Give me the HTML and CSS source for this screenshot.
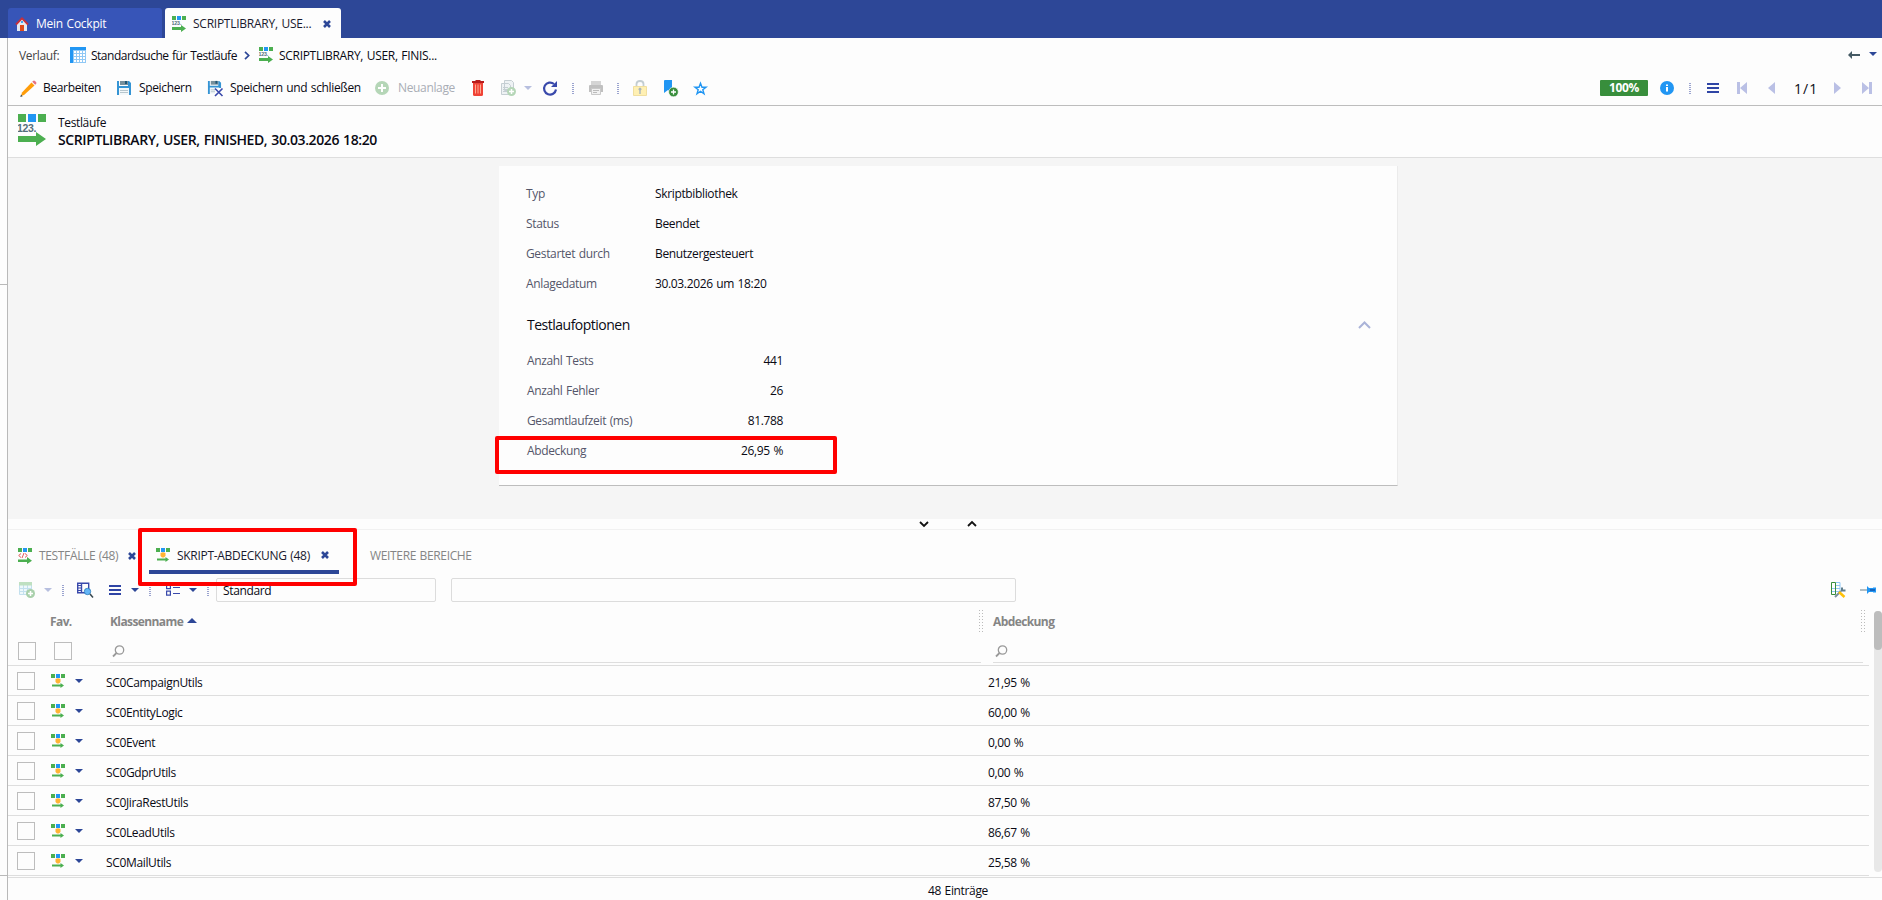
FILE: index.html
```html
<!DOCTYPE html>
<html lang="de">
<head>
<meta charset="UTF-8">
<meta name="viewport" content="width=device-width, initial-scale=1.0">
<title>Testläufe</title>
<link rel="stylesheet" href="styles.css">
</head>
<body>

<!-- shared icons -->
<svg class="symbols">
    <symbol id="i-run" viewBox="0 0 28 32">
        <path fill="#4caf50" d="M0 0h8v8H0zM20 0h8v8h-8z"/><path fill="#2196f3" d="M10 0h8v8h-8z"/>
        <text x="-1" y="18" font-family="Liberation Sans" font-weight="bold" font-size="10.5" fill="#546e7a">123.</text>
        <path fill="#4caf50" d="M0 22h18v-4l10 7-10 7v-4H0z"/>
    </symbol>
    <symbol id="i-case" viewBox="0 0 14 16">
        <path fill="#4caf50" d="M0 0h4v4H0zM10 0h4v4h-4zM0 11.500h9V9l5 3.700-5 3.300v-2H0z"/><path fill="#2196f3" d="M5 0h4v4H5z"/>
        <path fill="none" stroke="#e05a5a" d="M3 5.500L.7 7.500 3 9.500M6 5L4 10M7 5.500l2.300 2L7 9.500"/>
    </symbol>
    <symbol id="i-cover" viewBox="0 0 14 14">
        <path fill="#4caf50" d="M0 0h4v4H0zM10 0h4v4h-4zM1 10.500h8.500V9l3.500 2.500L9.500 14v-1.500H1z"/><path fill="#2196f3" d="M5 0h4v4H5z"/>
        <path fill="#ffb433" d="M4.500 5q2.500-1.500 5 0v3L8 9.500H6L4.500 8z"/>
    </symbol>
    <symbol id="i-x" viewBox="0 0 8 8"><path stroke="#2d4797" stroke-width="2.600" d="M1 1l6 6M7 1L1 7"/></symbol>
    <symbol id="i-caret" viewBox="0 0 8 4"><path fill="currentColor" d="M0 0h8L4 4z"/></symbol>
    <symbol id="i-menu" viewBox="0 0 12 10"><path fill="#2f45a5" d="M0 0h12v2H0zM0 4h12v2H0zM0 8h12v2H0z"/></symbol>
    <symbol id="i-mag" viewBox="0 0 13 13"><circle cx="7.500" cy="5" r="4.200" fill="none" stroke="#9a9a9a" stroke-width="1.300"/><path stroke="#9a9a9a" stroke-width="1.800" d="M4.500 8L1 11.500"/></symbol>
    <symbol id="i-save" viewBox="0 0 16 16">
        <path fill="#3594d4" d="M1 1h2v5h9V1h1l2 2v12H1z"/><path fill="#78909c" d="M4 1h8v4H4z"/><path fill="#1c5577" d="M9 1h2v3H9z"/>
        <path fill="#f3f8fa" d="M3 8h10v7H3z"/><path stroke="#b7c6cd" d="M4 10.500h8M4 12.500h8"/>
    </symbol>
</svg>

<header class="tabbar">
    <div class="tab">
        <svg width="14" height="14" viewBox="0 0 14 14"><path fill="#e4e9f2" d="M2 6l5-5 5 5v8H2z"/><path fill="#e04a1b" d="M5 8h4v6H5z"/><path fill="#42a5f5" d="M6 4h2v2H6z"/><path fill="none" stroke="#c62f3c" stroke-width="1.800" d="M1 7.500L7 1.300l6 6.200"/></svg>
        <span>Mein Cockpit</span>
    </div>
    <div class="tab active">
        <svg width="14" height="16"><use href="#i-run"/></svg>
        <span class="tab-text">SCRIPTLIBRARY, USE...</span>
        <svg width="8" height="8"><use href="#i-x"/></svg>
    </div>
</header>

<div class="page">
<aside class="rail"><i class="mark1"></i><i class="mark2"></i></aside>
<main>
    <nav class="history">
        <span class="muted">Verlauf:</span>
        <svg width="16" height="16" viewBox="0 0 16 16"><path fill="#90c8f5" d="M0 0h16v16H0z"/><path fill="#2196f3" d="M0 0h16v3H3v13H0z"/><path fill="#fff" d="M4 4h2v2H4zM7 4h2v2H7zM10 4h2v2h-2zM13 4h2v2h-2zM4 7h2v2H4zM7 7h2v2H7zM10 7h2v2h-2zM13 7h2v2h-2zM4 10h2v2H4zM7 10h2v2H7zM10 10h2v2h-2zM13 10h2v2h-2zM4 13h2v2H4zM7 13h2v2H7zM10 13h2v2h-2zM13 13h2v2h-2z"/></svg>
        <span class="t-std">Standardsuche für Testläufe</span>
        <svg width="6" height="9" viewBox="0 0 6 9"><path fill="none" stroke="#2d4797" stroke-width="1.700" d="M1 .8l3.700 3.700L1 8.200"/></svg>
        <svg width="14" height="16"><use href="#i-run"/></svg>
        <span class="t-lib">SCRIPTLIBRARY, USER, FINIS...</span>
        <svg width="12" height="8" viewBox="0 0 12 8"><path fill="#455a64" d="M0 4l4-4v3h8v2H4v3z"/></svg>
        <svg class="caret up3" width="8" height="4"><use href="#i-caret"/></svg>
    </nav>

    <div class="toolbar">
        <svg width="17" height="17" viewBox="0 0 17 17"><path fill="#ff9d0a" d="M11.500 2.500l3 3L4 15l-3 1 1-3.500z"/><path fill="#e57383" d="M13 1q1-1 2 0l1 1q1 1 0 2l-.8.8-3-3z"/><path fill="#37474f" d="M1 14.500L.3 17l2.400-.8z"/></svg>
        <span>Bearbeiten</span>
        <svg width="16" height="16"><use href="#i-save"/></svg>
        <span>Speichern</span>
        <svg width="16" height="17" viewBox="0 0 16 17"><use href="#i-save" width="15" height="15"/><path fill="#fdfdfd" d="M8 8h8v9H8z"/><path stroke="#3949ab" stroke-width="1.600" d="M8 8.500l7.500 7.500M15.500 8.500L8 16"/></svg>
        <span>Speichern und schließen</span>
        <svg width="14" height="14" viewBox="0 0 14 14"><circle cx="7" cy="7" r="7" fill="#b5d6b7"/><path stroke="#fff" stroke-width="2" d="M7 3v8M3 7h8"/></svg>
        <span class="off">Neuanlage</span>
        <svg width="12" height="16" viewBox="0 0 12 16"><path fill="#b71c1c" d="M0 1h3.500V0h5v1H12v2H0z"/><path fill="#f04336" d="M1 3h10v11.500q0 1.500-1.500 1.500h-7Q1 16 1 14.500z"/><path stroke="#ffab91" d="M3.500 4.500v9M6 4.500v9M8.500 4.500v9"/></svg>
        <svg width="15" height="16" viewBox="0 0 15 16"><path fill="#eef2f4" stroke="#c5ced3" d="M3.500.5h7l2 2v8h-9zM.5 3.500h7l2 2v9h-9z"/><path stroke="#c5ced3" d="M2 7.500h5M2 9.500h5M2 11.500h5"/><circle cx="10.500" cy="11.500" r="4.500" fill="#b5d6b7"/><path stroke="#fff" stroke-width="1.500" d="M10.500 9v5M8 11.500h5"/></svg>
        <svg class="caret off" width="8" height="4"><use href="#i-caret"/></svg>
        <svg width="15" height="15" viewBox="0 0 15 15"><path fill="none" stroke="#3949ab" stroke-width="2.200" d="M11 3A6 6 0 1 0 13 8.500"/><path fill="#3949ab" d="M8 6h6V0z"/></svg>
        <i class="sep"></i>
        <svg width="14" height="14" viewBox="0 0 14 14"><path fill="#d5d5d5" d="M2 0h10v4H2z"/><path fill="#c0c0c0" d="M0 5q0-1 1-1h12q1 0 1 1v6H0z"/><path fill="#f1f1f1" stroke="#c9c9c9" d="M2.500 7.500h9v6h-9z"/><path stroke="#bbb" d="M4 9.500h6M4 11.500h4"/></svg>
        <i class="sep"></i>
        <svg width="14" height="16" viewBox="0 0 14 16"><path fill="none" stroke="#c3cdd1" stroke-width="1.800" d="M3.500 7V4q0-3 3.500-3t3.500 3v3"/><path fill="#fff0b3" stroke="#f0dfa0" d="M.5 6.500h13v9H.5z"/><path fill="#a9b5bb" d="M6.300 10.500a1.500 1.500 0 1 1 1.400 0V14H6.300z"/></svg>
        <svg width="14" height="17" viewBox="0 0 14 17"><path fill="#2196f3" d="M0 1q0-1 1-1h7v13l-4-3-4 3z"/><circle cx="9.500" cy="12" r="4.800" fill="#388e3c" stroke="#fdfdfd" stroke-width=".6"/><path stroke="#fff" stroke-width="1.300" d="M9.500 9.500v5M7 12h5"/></svg>
        <svg width="13" height="13" viewBox="0 0 13 13"><path fill="none" stroke="#2196f3" stroke-width="1.400" d="M6.500 1.200l1.500 4h4L8.800 7.700l1.200 4.100-3.500-2.500L3 11.800l1.200-4.100L1 5.200h4z"/></svg>
        <span class="badge">100%</span>
        <svg width="14" height="14" viewBox="0 0 14 14"><circle cx="7" cy="7" r="7" fill="#2196f3"/><path fill="#fff" d="M6 3.500h2v1.500H6zM6 6h2v4.500H6z"/></svg>
        <i class="sep"></i>
        <svg width="12" height="10"><use href="#i-menu"/></svg>
        <svg width="10" height="12" viewBox="0 0 10 12"><path fill="#bac0e5" d="M0 0h3v12H0zM10 0v12L3 6z"/></svg>
        <svg width="7" height="12" viewBox="0 0 7 12"><path fill="#bac0e5" d="M7 0v12L0 6z"/></svg>
        <span class="pages">1/1</span>
        <svg width="7" height="12" viewBox="0 0 7 12"><path fill="#bac0e5" d="M0 0v12l7-6z"/></svg>
        <svg width="10" height="12" viewBox="0 0 10 12"><path fill="#bac0e5" d="M7 0h3v12H7zM0 0v12l7-6z"/></svg>
    </div>

    <div class="title">
        <svg width="28" height="32"><use href="#i-run"/></svg>
        <div>
            <p>Testläufe</p>
            <h1>SCRIPTLIBRARY, USER, FINISHED, 30.03.2026 18:20</h1>
        </div>
    </div>

    <section class="content">
        <div class="card">
            <dl class="fields">
                <dt>Typ</dt><dd>Skriptbibliothek</dd>
                <dt>Status</dt><dd>Beendet</dd>
                <dt>Gestartet durch</dt><dd>Benutzergesteuert</dd>
                <dt>Anlagedatum</dt><dd>30.03.2026 um 18:20</dd>
            </dl>
            <div class="group">
                <h2>Testlaufoptionen</h2>
                <svg width="13" height="8" viewBox="0 0 13 8"><path fill="none" stroke="#aab3d8" stroke-width="2" d="M1 7l5.500-5.500L12 7"/></svg>
            </div>
            <dl class="fields numbers">
                <dt>Anzahl Tests</dt><dd>441</dd>
                <dt>Anzahl Fehler</dt><dd>26</dd>
                <dt>Gesamtlaufzeit (ms)</dt><dd>81.788</dd>
                <dt>Abdeckung</dt><dd>26,95 %</dd>
            </dl>
            <div class="mark mark-value"></div>
        </div>
    </section>

    <div class="splitter">
        <svg width="10" height="6" viewBox="0 0 10 6"><path fill="none" stroke="#111" stroke-width="1.800" d="M1 1l4 4 4-4"/></svg>
        <svg width="10" height="6" viewBox="0 0 10 6"><path fill="none" stroke="#111" stroke-width="1.800" d="M1 5l4-4 4 4"/></svg>
    </div>

    <div class="subtabs">
        <div class="subtab first">
            <svg width="14" height="16"><use href="#i-case"/></svg>
            <span>TESTFÄLLE (48)</span>
            <svg width="8" height="8"><use href="#i-x"/></svg>
        </div>
        <div class="subtab current">
            <svg width="14" height="14"><use href="#i-cover"/></svg>
            <span>SKRIPT-ABDECKUNG (48)</span>
            <svg width="8" height="8"><use href="#i-x"/></svg>
        </div>
        <div class="subtab more"><span>WEITERE BEREICHE</span></div>
        <div class="mark mark-tab"></div>
    </div>

    <div class="listbar">
        <svg width="16" height="16" viewBox="0 0 16 16"><path fill="#eef8fb" stroke="#c3e0ee" d="M.5.500h12v12H.5zM.5 6.500h12M.5 9.500h12M4.500 3v10M8.500 3v10"/><path fill="#bfe0c1" d="M0 0h13v3.500H0z"/><circle cx="11.500" cy="11.500" r="4.500" fill="#a9d0ab"/><path stroke="#fff" stroke-width="1.500" d="M11.500 9v5M9 11.500h5"/></svg>
        <svg class="caret off" width="8" height="4"><use href="#i-caret"/></svg>
        <i class="sep"></i>
        <svg width="16" height="16" viewBox="0 0 16 16"><path fill="none" stroke="#3949ab" stroke-width="1.400" d="M.7 1.200h11v9.500H.7zM4.500 1v10"/><path stroke="#3949ab" d="M1 3.500h3M1 6h3M1 8.500h3"/><circle cx="10.500" cy="9.500" r="3.200" fill="#64b5f6" stroke="#2a7ab8" stroke-width=".8"/><path stroke="#37474f" stroke-width="1.500" d="M13 12l3 3.500"/></svg>
        <svg width="12" height="10"><use href="#i-menu"/></svg>
        <svg class="caret" width="8" height="4"><use href="#i-caret"/></svg>
        <i class="sep"></i>
        <svg width="14" height="12" viewBox="0 0 14 12"><path fill="none" stroke="#3949ab" stroke-width="1.200" d="M.6 1.100h3.800v3.500H.6zM.6 7.100h3.800v4H.6zM7 3.500h7M7 9.500h7"/></svg>
        <svg class="caret" width="8" height="4"><use href="#i-caret"/></svg>
        <i class="sep"></i>
        <div class="field">Standard</div>
        <div class="field wide"></div>
        <svg width="15" height="16" viewBox="0 0 15 16"><path fill="none" stroke="#90c8f5" d="M5 .5h4v10M5 3.500h4M1 6.500h8M1 9.500h7"/><path fill="none" stroke="#388e3c" d="M.5.500h4v12h-4z"/><path stroke="#78909c" stroke-width="2" d="M4 15l6-6"/><path fill="none" stroke="#607d8b" stroke-width="2" d="M11 5.500v3h3.500"/><path stroke="#ffc107" stroke-width="2.500" d="M8 10l5.500 5"/></svg>
        <svg width="16" height="8" viewBox="0 0 16 8"><path fill="#b0bec5" d="M0 3h7v2H0z"/><path fill="#2196f3" d="M7 0l2 2h4V1.500h3v5h-3V6H9L7 8z"/><path fill="#1565c0" d="M10 3h5v2h-5z"/></svg>
    </div>

    <div class="table">
        <div class="row head">
            <span class="fav">Fav.</span>
            <span class="name">Klassenname <svg width="10" height="5" viewBox="0 0 10 5"><path fill="#2d4797" d="M0 5l5-5 5 5z"/></svg></span>
            <i class="grip"></i>
            <span class="cov">Abdeckung</span>
            <i class="grip"></i>
        </div>
        <div class="row filter">
            <i class="box"></i>
            <i class="box"></i>
            <div class="search"><svg width="13" height="13"><use href="#i-mag"/></svg></div>
            <div class="search"><svg width="13" height="13"><use href="#i-mag"/></svg></div>
        </div>
        <div class="row"><i class="box"></i><svg width="14" height="14"><use href="#i-cover"/></svg><svg class="caret" width="8" height="4"><use href="#i-caret"/></svg><span>SC0CampaignUtils</span><span>21,95 %</span></div>
        <div class="row"><i class="box"></i><svg width="14" height="14"><use href="#i-cover"/></svg><svg class="caret" width="8" height="4"><use href="#i-caret"/></svg><span>SC0EntityLogic</span><span>60,00 %</span></div>
        <div class="row"><i class="box"></i><svg width="14" height="14"><use href="#i-cover"/></svg><svg class="caret" width="8" height="4"><use href="#i-caret"/></svg><span>SC0Event</span><span>0,00 %</span></div>
        <div class="row"><i class="box"></i><svg width="14" height="14"><use href="#i-cover"/></svg><svg class="caret" width="8" height="4"><use href="#i-caret"/></svg><span>SC0GdprUtils</span><span>0,00 %</span></div>
        <div class="row"><i class="box"></i><svg width="14" height="14"><use href="#i-cover"/></svg><svg class="caret" width="8" height="4"><use href="#i-caret"/></svg><span>SC0JiraRestUtils</span><span>87,50 %</span></div>
        <div class="row"><i class="box"></i><svg width="14" height="14"><use href="#i-cover"/></svg><svg class="caret" width="8" height="4"><use href="#i-caret"/></svg><span>SC0LeadUtils</span><span>86,67 %</span></div>
        <div class="row"><i class="box"></i><svg width="14" height="14"><use href="#i-cover"/></svg><svg class="caret" width="8" height="4"><use href="#i-caret"/></svg><span>SC0MailUtils</span><span>25,58 %</span></div>
        <div class="scrollbar"><i></i></div>
    </div>
    <footer>48 Einträge</footer>
</main>
</div>

</body>
</html>
```
FILE: styles.css
```css
* {
    box-sizing: border-box;
}

body {
    margin: 0;
    height: 900px;
    overflow: hidden;
    background: #fdfdfd;
    color: #0a0a14;
    font-family: "Open Sans", "Noto Sans", sans-serif;
    font-size: 12px;
    line-height: 16px;
    letter-spacing: -0.35px;
    word-spacing: 0.8px;
    white-space: nowrap;
}

svg {
    display: block;
    flex: none;
    overflow: visible;
}

p, h1, h2, dl, dd {
    margin: 0;
}

.symbols {
    position: absolute;
    width: 0;
    height: 0;
}

/* window tabs */
.tabbar {
    height: 38px;
    padding: 8px 0 0 8px;
    display: flex;
    gap: 3px;
    background: #2d4797;
}

.tab {
    width: 154px;
    padding: 1px 0 0 7px;
    display: flex;
    align-items: center;
    gap: 7px;
    border-radius: 3px 3px 0 0;
    background: #3755b8;
    color: #fff;
    letter-spacing: -0.25px;
}

.tab.active {
    width: 176px;
    background: #fdfdfd;
    color: #1a1a2e;
}

.tab-text {
    width: 123px;
}

.page {
    display: flex;
    height: 862px;
}

.rail {
    width: 8px;
    flex: none;
    border-right: 1px solid #b9b9b9;
}

.rail i {
    display: block;
    height: 1px;
    background: #b9b9b9;
}

.mark1 {
    margin-top: 246px;
}

.mark2 {
    margin-top: 590px;
}

main {
    width: 1874px;
}

.muted {
    color: #444;
}

.history {
    height: 34px;
    padding-left: 11px;
    display: grid;
    grid-template-columns: 51px 21px 153px 15px 20px 1569px 21px 10px;
    align-items: center;
}

.history span {
    padding-top: 2px;
}

.history .t-std {
    letter-spacing: -0.5px;
}

.history .t-lib {
    letter-spacing: -0.3px;
}

.caret {
    color: #2d4797;
}

.caret.off {
    color: #b7bfdf;
}

.up3 {
    margin-top: -3px;
}

/* record toolbar */
.toolbar {
    height: 34px;
    padding: 0 0 1px 12px;
    display: grid;
    grid-template-columns: 23px 73px 23px 68px 23px 145px 23px 74px 29px 23px 19px 29px 17px 28px 16px 31px 30px 906px 60px 29px 18px 30px 31px 26px 40px 28px 10px;
    align-items: center;
    border-bottom: 1px solid #bdbdbd;
}

.toolbar span {
    margin-top: -1px;
}

.off {
    color: #a9adb5;
}

.sep {
    width: 2px;
    height: 11px;
    background: repeating-linear-gradient(#9aa3cf 0 1px, transparent 1px 2px);
}

.toolbar .badge {
    width: 48px;
    height: 16px;
    margin-top: 0;
    border-radius: 1px;
    background: #388e3c;
    color: #fff;
    font-weight: 700;
    text-align: center;
}

.toolbar .pages {
    margin-top: 2px;
    font-size: 14px;
    letter-spacing: 1px;
}

.title {
    height: 52px;
    padding: 8px 0 0 10px;
    display: flex;
    gap: 12px;
    border-bottom: 1px solid #dedede;
}

.title p {
    height: 17px;
    padding-top: 1px;
}

h1 {
    font-size: 14px;
    font-weight: 600;
    line-height: 18px;
    letter-spacing: -0.4px;
}

/* details */
.content {
    height: 361px;
    padding: 8px 0 0 491px;
    background: #f5f5f5;
}

.card {
    position: relative;
    width: 899px;
    height: 320px;
    padding: 13px 26px 0 27px;
    background: #fdfdfd;
    border-right: 1px solid #ebebeb;
    border-bottom: 1px solid #bdbdbd;
}

.fields {
    display: grid;
    grid-template-columns: 129px 200px;
    grid-auto-rows: 30px;
    align-items: center;
}

.fields dt {
    color: #54566a;
}

.group {
    height: 46px;
    padding: 6px 0 0 1px;
    display: flex;
    justify-content: space-between;
    align-items: center;
}

h2 {
    font-size: 14px;
    font-weight: 400;
    letter-spacing: -0.5px;
}

.numbers {
    grid-template-columns: 156px 100px;
    padding: 1px 0 0 1px;
}

.numbers dd {
    text-align: right;
}

.mark {
    position: absolute;
    border: 4px solid #f00;
    border-radius: 2px;
}

.mark-value {
    left: -4px;
    top: 270px;
    width: 342px;
    height: 38px;
}

.mark-tab {
    left: 130px;
    top: -2px;
    width: 219px;
    height: 58px;
}

.splitter {
    height: 11px;
    padding-left: 911px;
    display: flex;
    align-items: center;
    gap: 38px;
    border-bottom: 1px solid #f1f1f1;
}

/* lower area */
.subtabs {
    position: relative;
    height: 46px;
    display: flex;
}

.subtab {
    height: 44px;
    padding-top: 7px;
    display: flex;
    align-items: center;
    color: #858585;
}

.subtab span {
    padding-top: 1px;
}

.first {
    padding-left: 10px;
    width: 141px;
}

.first span {
    width: 89px;
    margin-left: 7px;
}

.current {
    width: 190px;
    padding: 10px 0 0 7px;
    border-bottom: 4px solid #2d4797;
    color: #1a1a2e;
    letter-spacing: -0.3px;
}

.current span {
    width: 144px;
    margin-left: 7px;
}

.more {
    padding-left: 31px;
}

.listbar {
    height: 30px;
    padding: 0 0 2px 11px;
    display: grid;
    grid-template-columns: 25px 18px 15px 32px 22px 18px 17px 23px 18px 9px 235px 1380px 29px 16px;
    align-items: center;
}

.field {
    width: 220px;
    height: 24px;
    padding: 4px 6px 0;
    border: 1px solid #dcdcdc;
    border-radius: 2px;
}

.wide {
    width: 565px;
}

.table {
    position: relative;
    height: 272px;
    border-bottom: 1px solid #dedede;
}

.row {
    width: 1861px;
    height: 30px;
    padding-left: 9px;
    display: grid;
    grid-template-columns: 34px 24px 31px 882px auto;
    align-items: center;
    border-bottom: 1px solid #dedede;
}

.row span {
    padding-top: 5px;
}

.row > svg {
    margin-top: 1px;
}

.box {
    width: 18px;
    height: 18px;
    margin-top: 1px;
    border: 1px solid #bdbdbd;
    background: #fdfdfd;
}

.head {
    padding-left: 42px;
    grid-template-columns: 60px 869px 14px 868px 4px;
    border: 0;
    color: #858585;
    font-weight: 700;
    letter-spacing: -0.6px;
}

.head span {
    padding: 1px 0 0;
}

.name svg {
    display: inline-block;
    margin-bottom: 3px;
}

.grip {
    width: 4px;
    height: 22px;
    background: radial-gradient(circle at 0.5px 0.5px, #bbb 0.7px, transparent 0.8px) 0 0 / 3px 3px;
}

.filter {
    padding-left: 10px;
    grid-template-columns: 36px 56px 871px 882px;
}

.search {
    height: 21px;
    align-self: end;
    margin-bottom: 2px;
    padding: 3px 0 0 2px;
    border-bottom: 1px solid #dedede;
}

.search + .search {
    margin-left: 12px;
}

.scrollbar {
    position: absolute;
    top: 5px;
    right: 0;
    width: 8px;
    height: 261px;
    border-radius: 4px;
    background: #e8e8e8;
}

.scrollbar i {
    display: block;
    height: 39px;
    border-radius: 4px;
    background: #bdbdbd;
}

footer {
    padding: 5px 0 0 920px;
}
```
